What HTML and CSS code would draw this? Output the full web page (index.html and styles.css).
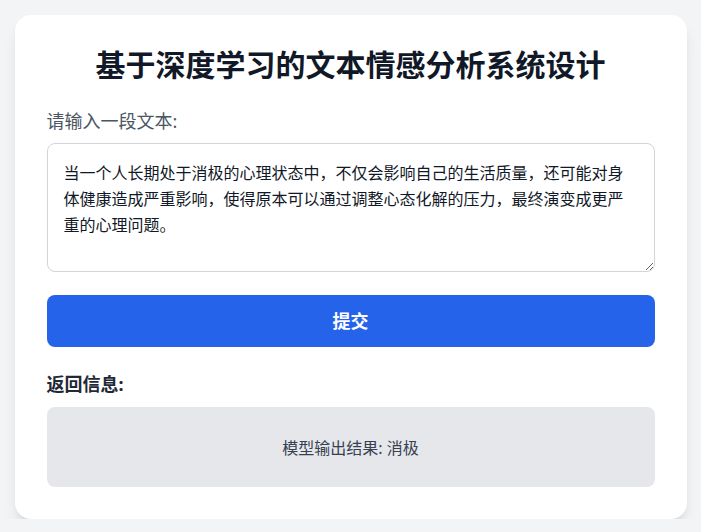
FILE: index.html
```html
<!DOCTYPE html>
<html lang="zh">
<head>
    <meta charset="UTF-8">
    <meta name="viewport" content="width=device-width, initial-scale=1.0">
    <title>基于深度学习的文本情感分析系统设计</title>
    <link rel="stylesheet" href="styles.css">
</head>
<body>
    <div class="card">
        <h1 class="title">基于深度学习的文本情感分析系统设计</h1>

        <label for="inputText" class="label">请输入一段文本:</label>
        <textarea id="inputText" class="text-input">当一个人长期处于消极的心理状态中，不仅会影响自己的生活质量，还可能对身体健康造成严重影响，使得原本可以通过调整心态化解的压力，最终演变成更严重的心理问题。</textarea>

        <button type="button" class="submit-btn">提交</button>

        <h2 class="result-title">返回信息:</h2>
        <div class="result-box">模型输出结果: 消极</div>
    </div>
</body>
</html>
```

FILE: styles.css
```css
* {
    box-sizing: border-box;
}

body {
    margin: 0;
    background-color: #f3f4f6;
    font-family: 'Noto Sans', 'Noto Sans CJK SC', sans-serif;
    color: #111827;
}

.card {
    width: 672px;
    margin: 15px auto 0;
    padding: 32px;
    background-color: #fff;
    border-radius: 16px;
    box-shadow: 0 10px 15px -3px rgba(0, 0, 0, 0.1), 0 4px 6px -4px rgba(0, 0, 0, 0.1);
}

.title {
    margin: 0 0 24px;
    font-size: 30px;
    line-height: 36px;
    font-weight: 700;
    text-align: center;
    color: #111827;
}

.label {
    display: block;
    margin-bottom: 8px;
    font-size: 18px;
    line-height: 28px;
    color: #4b5563;
}

.text-input {
    display: block;
    width: 100%;
    height: 129px;
    padding: 16px;
    border: 1px solid #d1d5db;
    border-radius: 8px;
    font-family: inherit;
    font-size: 16px;
    line-height: 26px;
    color: #111827;
    resize: vertical;
}

.submit-btn {
    display: block;
    width: 100%;
    margin-top: 23px;
    padding: 12px;
    border: none;
    border-radius: 8px;
    background-color: #2563eb;
    color: #fff;
    font-family: inherit;
    font-size: 18px;
    line-height: 28px;
    font-weight: 700;
    cursor: pointer;
}

.result-title {
    margin: 23px 0 9px;
    font-size: 18px;
    line-height: 28px;
    font-weight: 700;
    color: #1f2937;
}

.result-box {
    display: flex;
    align-items: center;
    justify-content: center;
    height: 80px;
    border-radius: 8px;
    background-color: #e5e7eb;
    font-size: 16px;
    color: #374151;
}
```
